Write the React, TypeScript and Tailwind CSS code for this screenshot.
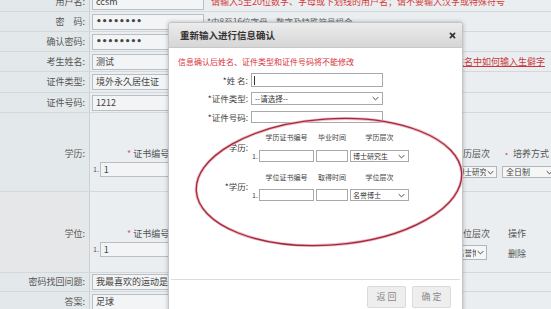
import React from "react";

function Chevron({ className = "" }: { className?: string }) {
  return (
    <svg viewBox="0 0 10 6" className={className} fill="none" stroke="#444" strokeWidth="1.4">
      <polyline points="1,1 5,5 9,1" />
    </svg>
  );
}

function Row({ h, label, children }: { h: string; label: string; children?: React.ReactNode }) {
  return (
    <div className={`flex ${h} border-b border-[#d2d8db]`}>
      <div className="w-[90px] shrink-0 bg-[#e3e8ea] border-r border-[#cbd1d4] flex items-center justify-end pr-[4px] text-[9px] text-[#555]">
        {label}
      </div>
      <div className="flex-1 flex items-center bg-[#eaeef0] min-w-0">{children}</div>
    </div>
  );
}

function PageInput({ w, v, dots = false }: { w: string; v: string; dots?: boolean }) {
  return (
    <div className={`${w} h-[16px] ml-[2px] shrink-0 bg-[#f3f4f5] border border-[#b8bec2] flex items-center pl-[3px] text-[#444] overflow-hidden whitespace-nowrap ${dots ? "font-['DejaVu_Sans',sans-serif] text-[9px] font-bold text-[#333]" : "text-[9px]"}`}>
      {v}
    </div>
  );
}

export default function App() {
  const font = "font-['Noto_Sans_CJK_SC',sans-serif]";
  return (
    <div className={`relative w-[551px] h-[309px] overflow-hidden bg-[#eaeef0] ${font}`}>
      {/* background form */}
      <div className="flex flex-col -mt-[8px]">
        <Row h="h-[20px]" label="用户名:">
          <PageInput w="w-[112px]" v="ccsm" />
          <span className="ml-[7px] text-[9px] text-[#d23a3a] whitespace-nowrap">请输入5至20位数字、字母或下划线的用户名；请不要输入汉字或特殊符号</span>
        </Row>
        <Row h="h-[20px]" label="密　码:">
          <PageInput w="w-[112px]" v="••••••••" dots />
          <span className="ml-[3px] text-[8.5px] text-[#666] whitespace-nowrap">*由8至16位字母、数字及特殊符号组合</span>
        </Row>
        <Row h="h-[20px]" label="确认密码:">
          <PageInput w="w-[112px]" v="••••••••" dots />
        </Row>
        <Row h="h-[20px]" label="考生姓名:">
          <div className="flex-1 flex items-center justify-between pr-[6px]">
            <PageInput w="w-[112px]" v="测试" />
            <span className="text-[9px] text-[#c8383c] underline whitespace-nowrap">如姓名中如何输入生僻字</span>
          </div>
        </Row>
        <Row h="h-[21px]" label="证件类型:">
          <PageInput w="w-[112px]" v="境外永久居住证" />
        </Row>
        <Row h="h-[20px]" label="证件号码:">
          <PageInput w="w-[112px]" v="1212" />
        </Row>
        <div className="flex h-[79px] border-b border-[#d2d8db]">
          <div className="w-[90px] shrink-0 bg-[#e3e8ea] border-r border-[#cbd1d4] flex items-start justify-end pr-[4px] pt-[34px] text-[9px] text-[#555]">学历:</div>
          <div className="flex-1 flex bg-[#eaeef0]">
            <div className="flex flex-col pt-[35px] pl-[3px]">
              <div className="pl-[34px] text-[9px] text-[#555] h-[11px] leading-[11px]"><span className="text-[#e05a6a]">*</span> 证书编号</div>
              <div className="flex items-center mt-[3px]">
                <span className="text-[7px] text-[#555] mr-[1px]">1.</span>
                <div className="w-[120px] h-[15px] bg-[#f3f4f5] border border-[#b8bec2] text-[9px] text-[#444] pl-[3px] leading-[13px]">1</div>
              </div>
            </div>
            <div className="flex-1" />
            <div className="w-[46px] shrink-0 flex flex-col items-start pt-[35px]">
              <div className="text-[9px] text-[#555] h-[11px] leading-[11px] whitespace-nowrap">学历层次</div>
              <div className="mt-[7px] w-[43px] h-[12px] bg-[#f5f6f6] border border-[#b0b6ba] flex items-center px-[2px] text-[7.5px] text-[#444]">
                <span className="flex-1 min-w-0 overflow-hidden whitespace-nowrap">博士研究生</span>
                <Chevron className="w-[7px] h-[5px] shrink-0 ml-[1px]" />
              </div>
            </div>
            <div className="w-[51px] shrink-0 flex flex-col items-start pt-[35px] pl-[2px]">
              <div className="text-[9px] text-[#555] h-[11px] leading-[11px] whitespace-nowrap"><span className="text-[#e05a6a]">·</span> 培养方式</div>
              <div className="mt-[7px] w-[56px] shrink-0 h-[12px] bg-[#f5f6f6] border border-[#b0b6ba] flex items-center justify-between pl-[3px] pr-[4px] text-[8px] text-[#444] whitespace-nowrap">全日制<Chevron className="w-[7px] h-[5px]" /></div>
            </div>
          </div>
        </div>
        <div className="flex h-[81px] border-b border-[#d2d8db]">
          <div className="w-[90px] shrink-0 bg-[#e5e7e8] border-r border-[#cbd1d4] flex items-start justify-end pr-[4px] pt-[35px] text-[9px] text-[#555]">学位:</div>
          <div className="flex-1 flex bg-[#eaeef0]">
            <div className="flex flex-col pt-[36px] pl-[3px]">
              <div className="pl-[34px] text-[9px] text-[#555] h-[11px] leading-[11px]"><span className="text-[#e05a6a]">*</span> 证书编号</div>
              <div className="flex items-center mt-[3px]">
                <span className="text-[7px] text-[#555] mr-[1px]">1.</span>
                <div className="w-[120px] h-[15px] bg-[#f3f4f5] border border-[#b8bec2] text-[9px] text-[#444] pl-[3px] leading-[13px]">1</div>
              </div>
            </div>
            <div className="flex-1" />
            <div className="w-[46px] shrink-0 flex flex-col items-start pt-[36px]">
              <div className="text-[9px] text-[#555] h-[11px] leading-[11px] whitespace-nowrap">学位层次</div>
              <div className="mt-[6px] w-[33px] h-[15px] bg-[#f5f6f6] border border-[#b0b6ba] flex items-center px-[2px] text-[7.5px] text-[#444]">
                <span className="flex-1 min-w-0 overflow-hidden whitespace-nowrap">名誉博士</span>
                <Chevron className="w-[7px] h-[5px] shrink-0 ml-[1px]" />
              </div>
            </div>
            <div className="w-[51px] shrink-0 flex flex-col items-start pt-[36px] pl-[8px]">
              <div className="text-[9px] text-[#555] h-[11px] leading-[11px]">操作</div>
              <div className="mt-[8px] text-[9px] text-[#555]">删除</div>
            </div>
          </div>
        </div>
        <Row h="h-[19px]" label="密码找回问题:">
          <PageInput w="w-[112px]" v="我最喜欢的运动是什么" />
        </Row>
        <Row h="h-[20px]" label="答案:">
          <PageInput w="w-[112px]" v="足球" />
        </Row>
      </div>

      {/* modal */}
      <div className="absolute left-[168px] top-[22px] w-[295px] h-[300px] bg-white border border-[#c4c4c4] rounded-t-[3px] shadow-[0_0_4px_rgba(0,0,0,0.25)] flex flex-col">
        <div className="h-[25px] shrink-0 bg-gradient-to-b from-[#ececec] to-[#d6d6d6] border-b border-[#c8c8c8] rounded-t-[3px] flex items-center justify-between pl-[11px] pr-[6px]">
          <span className="text-[9.5px] font-bold text-[#333]">重新输入进行信息确认</span>
          <svg viewBox="0 0 10 10" className="w-[7px] h-[7px]" stroke="#333" strokeWidth="2.4" strokeLinecap="round">
            <line x1="2" y1="2" x2="8" y2="8" />
            <line x1="8" y1="2" x2="2" y2="8" />
          </svg>
        </div>
        <div className="flex flex-col">
          <div className="mt-[9px] h-[10px] leading-[10px] pl-[9px] text-[8px] text-[#d8343c] whitespace-nowrap">信息确认后姓名、证件类型和证件号码将不能修改</div>

          <div className="mt-[6px] flex items-center h-[14px]">
            <div className="w-[79px] text-right text-[8.5px] text-[#444]">*姓 名:</div>
            <div className="ml-[3px] w-[132px] h-[14px] border border-[#a9a9a9] bg-white flex items-center pl-[2px]"><div className="w-[1px] h-[9px] bg-[#333]" /></div>
          </div>
          <div className="mt-[5px] flex items-center h-[13px]">
            <div className="w-[79px] text-right text-[8.5px] text-[#444]">*证件类型:</div>
            <div className="ml-[3px] w-[132px] h-[13px] border border-[#a9a9a9] bg-white flex items-center justify-between pl-[3px] pr-[3px] text-[7.5px] text-[#333]">--请选择--<Chevron className="w-[7px] h-[5px]" /></div>
          </div>
          <div className="mt-[6px] flex items-center h-[12px]">
            <div className="w-[79px] text-right text-[8.5px] text-[#444]">*证件号码:</div>
            <div className="ml-[3px] w-[132px] h-[12px] border border-[#a9a9a9] bg-white" />
          </div>

          {[
            { label: "学历:", h: ["学历证书编号", "毕业时间", "学历层次"], sel: "博士研究生", mt: "mt-[9px]" },
            { label: "*学历:", h: ["学位证书编号", "取得时间", "学位层次"], sel: "名誉博士", mt: "mt-[10px]" },
          ].map((b, i) => (
            <div key={i} className={`${b.mt} flex items-center`}>
              <div className="w-[79px] text-right text-[8.5px] text-[#444]">{b.label}</div>
              <div className="ml-[2px] flex flex-col">
                <div className="flex h-[10px] items-center text-[7px] text-[#444] leading-[10px]">
                  <div className="w-[9px]" />
                  <div className="w-[55px] text-center">{b.h[0]}</div>
                  <div className="w-[2px]" />
                  <div className="w-[32px] text-center">{b.h[1]}</div>
                  <div className="w-[2px]" />
                  <div className="w-[59px] text-center">{b.h[2]}</div>
                </div>
                <div className={`${i === 0 ? "mt-[8px]" : "mt-[7px]"} flex items-center h-[12px]`}>
                  <span className="w-[9px] pl-[2px] text-[7px] text-[#444]">1.</span>
                  <div className="w-[55px] h-[12px] border border-[#a9a9a9] bg-white" />
                  <div className="ml-[2px] w-[32px] h-[12px] border border-[#a9a9a9] bg-white" />
                  <div className="ml-[2px] w-[59px] h-[12px] border border-[#a9a9a9] bg-white flex items-center justify-between pl-[2px] pr-[3px] text-[7px] text-[#333]">{b.sel}<Chevron className="w-[7px] h-[5px]" /></div>
                </div>
              </div>
            </div>
          ))}

          <div className="mt-[78px] mx-[2px] h-[1px] bg-[#dcdcdc]" />
          <div className="mt-[6px] flex justify-end gap-[6px] pr-[11px]">
            <div className="w-[39px] h-[22px] bg-[#eeeeee] border border-[#dadada] rounded-[2px] flex items-center justify-center text-[9px] text-[#888]">返 回</div>
            <div className="w-[39px] h-[22px] bg-[#eeeeee] border border-[#dadada] rounded-[2px] flex items-center justify-center text-[9px] text-[#888]">确 定</div>
          </div>
        </div>
      </div>

      {/* hand-drawn red ellipse annotation */}
      <svg className="absolute left-0 top-0 pointer-events-none" width="551" height="309" viewBox="0 0 551 309">
        <ellipse cx="329" cy="182" rx="133" ry="63" transform="rotate(-4 329 182)" fill="none" stroke="#f2b9c2" strokeWidth="3" />
        <ellipse cx="329" cy="182" rx="133" ry="63" transform="rotate(-4 329 182)" fill="none" stroke="#9e2a3c" strokeWidth="1.3" />
      </svg>
    </div>
  );
}
